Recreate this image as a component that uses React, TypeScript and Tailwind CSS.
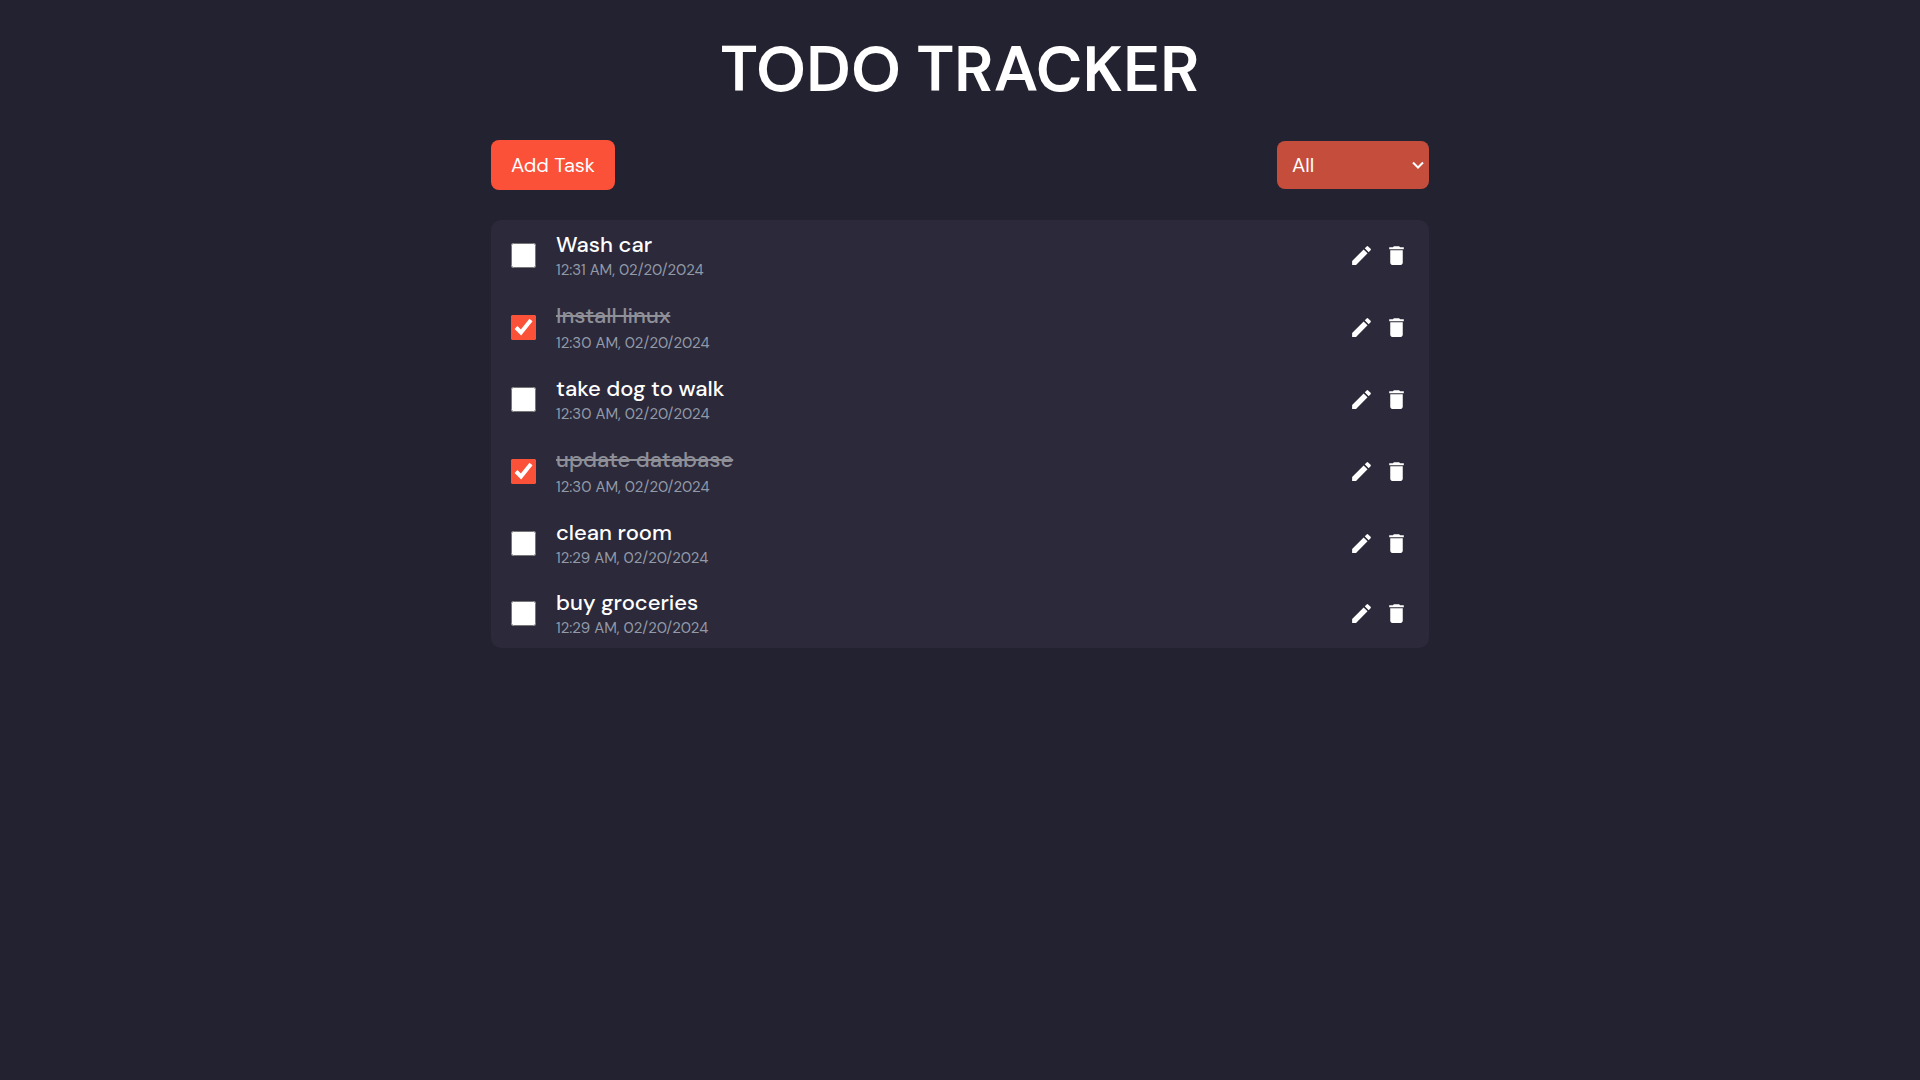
import { useState } from "react";
import { MdDelete, MdEdit } from "react-icons/md";

type Task = { id: number; title: string; time: string; done: boolean };

const initialTasks: Task[] = [
  { id: 1, title: "Wash car", time: "12:31 AM, 02/20/2024", done: false },
  { id: 2, title: "Install linux", time: "12:30 AM, 02/20/2024", done: true },
  { id: 3, title: "take dog to walk", time: "12:30 AM, 02/20/2024", done: false },
  { id: 4, title: "update database", time: "12:30 AM, 02/20/2024", done: true },
  { id: 5, title: "clean room", time: "12:29 AM, 02/20/2024", done: false },
  { id: 6, title: "buy groceries", time: "12:29 AM, 02/20/2024", done: false },
];

type RowProps = { task: Task; onToggle: () => void; onDelete: () => void };

function TaskRow({ task, onToggle, onDelete }: RowProps) {
  const inputId = `task-${task.id}`;
  return (
    <li className="flex items-center gap-5 px-5 py-2.5">
      <input
        id={inputId}
        type="checkbox"
        checked={task.done}
        onChange={onToggle}
        className="size-[25px] shrink-0 accent-[#fb5139]"
      />
      <div className="min-w-0 flex-1">
        <label
          htmlFor={inputId}
          className={
            task.done
              ? "block text-[22px] leading-8 font-medium text-[#8f8f98] line-through"
              : "block text-[22px] leading-[30px] font-medium text-white"
          }
        >
          {task.title}
        </label>
        <p
          className={
            task.done
              ? "text-[15px] leading-[22px] text-[#929aa8]"
              : "text-[15px] leading-5 text-[#929aa8]"
          }
        >
          {task.time}
        </p>
      </div>
      <div className="flex gap-2.5 text-[25px] text-white">
        <button type="button" aria-label={`Edit ${task.title}`}>
          <MdEdit />
        </button>
        <button type="button" aria-label={`Delete ${task.title}`} onClick={onDelete}>
          <MdDelete />
        </button>
      </div>
    </li>
  );
}

export default function App() {
  const [tasks, setTasks] = useState(initialTasks);
  const [filter, setFilter] = useState("all");

  const visible = tasks.filter(
    (t) => filter === "all" || (filter === "completed") === t.done,
  );

  return (
    <main className="min-h-screen bg-[#232230] px-5 pt-8 font-['DM_Sans','Inter',sans-serif] text-white">
      <div className="mx-auto max-w-[938px]">
        <h1 className="text-center text-[64px] leading-[76px] font-semibold">TODO TRACKER</h1>
        <div className="mt-8 flex items-center justify-between">
          <button
            type="button"
            className="h-[50px] rounded-lg bg-[#fb5139] px-5 text-[20px] text-white"
          >
            Add Task
          </button>
          <div className="relative w-[152px]">
            <select
              aria-label="Filter tasks"
              value={filter}
              onChange={(e) => setFilter(e.target.value)}
              className="h-12 w-full appearance-none rounded-lg bg-[#c44d3c] pr-6 pl-[15px] text-[20px] text-white"
            >
              <option value="all">All</option>
              <option value="completed">Completed</option>
              <option value="incomplete">Incomplete</option>
            </select>
            <svg
              viewBox="0 0 12 8"
              className="pointer-events-none absolute top-5 right-[5px] h-2 w-3"
              fill="none"
              stroke="currentColor"
              strokeWidth="2"
              aria-hidden="true"
            >
              <path d="M1 1.5 6 6.5 11 1.5" />
            </svg>
          </div>
        </div>
        <ul className="mt-[30px] rounded-[10px] bg-[#2b293a]">
          {visible.map((task) => (
            <TaskRow
              key={task.id}
              task={task}
              onToggle={() =>
                setTasks(tasks.map((t) => (t.id === task.id ? { ...t, done: !t.done } : t)))
              }
              onDelete={() => setTasks(tasks.filter((t) => t.id !== task.id))}
            />
          ))}
        </ul>
      </div>
    </main>
  );
}
